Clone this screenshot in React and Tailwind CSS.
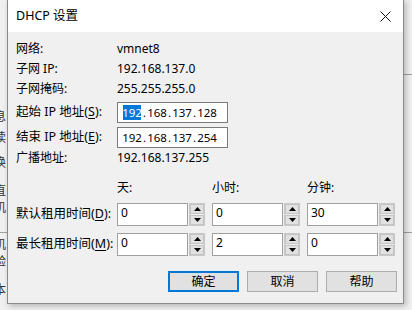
import React from 'react';

const FONT = "font-['Noto_Sans','Noto_Sans_CJK_SC',sans-serif]";

const Mn = ({ text, k }) => (
  <>
    {text}(<span className="underline underline-offset-2">{k}</span>):
  </>
);

const IpField = ({ parts, selectFirst }) => (
  <div className="flex items-center w-[111px] h-[21px] bg-white border border-[#7a7a7a] pl-[5px] text-[11.5px] leading-[15px] text-black">
    {parts.map((p, i) => (
      <React.Fragment key={i}>
        {i > 0 && <span className="w-[7px] h-[15px] flex justify-center">.</span>}
        <span className={`w-[18px] h-[15px] flex justify-center ${i === 0 && selectFirst ? 'bg-[#0078d7] text-white' : ''}`}>{p}</span>
      </React.Fragment>
    ))}
  </div>
);

const Spin = ({ value }) => (
  <div className="flex h-[23px] w-[88px]">
    <div className="flex-1 bg-white border border-[#a0a0a0] pl-[3px] pt-[1px] text-[12px] leading-[16px] text-black">{value}</div>
    <div className="w-[16px] ml-[1px] flex flex-col gap-[1px] border border-[#c8c8c8] bg-[#f0f0f0]">
      <div className="flex-1 bg-[#e1e1e1] border border-[#c4c4c4] flex items-center justify-center">
        <svg width="7" height="4" viewBox="0 0 7 4"><path d="M3.5 0 L7 4 L0 4 Z" fill="#000" /></svg>
      </div>
      <div className="flex-1 bg-[#e1e1e1] border border-[#c4c4c4] flex items-center justify-center">
        <svg width="7" height="4" viewBox="0 0 7 4"><path d="M0 0 L7 0 L3.5 4 Z" fill="#000" /></svg>
      </div>
    </div>
  </div>
);

const Btn = ({ children, primary }) => (
  <div className={`w-[71px] h-[21px] flex items-center justify-center bg-[#e1e1e1] text-[12px] text-black ${primary ? 'border-2 border-[#0078d7]' : 'border border-[#adadad]'}`}>
    {children}
  </div>
);

export default function App() {
  const bgChars = [
    ['息', 109], ['读', 130], ['换', 155], ['直', 183], ['机', 200], ['机', 237], ['验', 254], ['本', 282],
  ];
  return (
    <div className={`relative w-[412px] h-[310px] overflow-hidden bg-[#f0f0f0] ${FONT}`}>
      {/* background window fragments */}
      {bgChars.map(([c, y]) => (
        <span key={y} className="absolute left-[-6px] text-[12px] leading-[16px] text-[#333]" style={{ top: y }}>{c}</span>
      ))}
      <div className="absolute left-0 top-[232px] w-[10px] h-px bg-[#a0a0a0]" />
      <div className="absolute right-0 top-[74px] w-[10px] h-px bg-[#a0a0a0]" />
      <div className="absolute right-0 top-[232px] w-[10px] h-px bg-[#a0a0a0]" />

      {/* dialog */}
      <div className="absolute left-[7px] top-[-1px] w-[397px] h-[305px] border border-[#8a8a8a] bg-[#f0f0f0] shadow-[2px_2px_6px_rgba(0,0,0,0.25)] flex flex-col">
        <div className="h-[32px] bg-white flex items-center justify-between pl-[8px] pr-[8px] shrink-0">
          <span className="text-[12.5px] text-black">DHCP 设置</span>
          <svg width="11" height="11" viewBox="0 0 11 11" className="mr-[4px]">
            <path d="M0.5 0.5 L10.5 10.5 M10.5 0.5 L0.5 10.5" stroke="#111" strokeWidth="1" />
          </svg>
        </div>

        <div className="pl-[8px] pt-[7px] text-[12px] text-black">
          <div className="grid grid-cols-[101px_1fr] auto-rows-[20px] items-center">
            <span>网络:</span><span>vmnet8</span>
            <span>子网 IP:</span><span>192.168.137.0</span>
            <span>子网掩码:</span><span>255.255.255.0</span>
          </div>
          <div className="grid grid-cols-[101px_1fr] items-center mt-[3px] gap-y-[4px]">
            <span className="text-[12.5px]"><Mn text="起始 IP 地址" k="S" /></span>
            <IpField parts={['192', '168', '137', '128']} selectFirst />
            <span className="text-[12.5px]"><Mn text="结束 IP 地址" k="E" /></span>
            <IpField parts={['192', '168', '137', '254']} />
          </div>
          <div className="grid grid-cols-[101px_1fr] h-[20px] items-center">
            <span>广播地址:</span><span>192.168.137.255</span>
          </div>

          <div className="grid grid-cols-[101px_95px_95px_1fr] items-center mt-[10px]">
            <span />
            <span className="h-[20px] leading-[20px]">天:</span>
            <span className="h-[20px] leading-[20px]">小时:</span>
            <span className="h-[20px] leading-[20px]">分钟:</span>
          </div>
          <div className="grid grid-cols-[101px_95px_95px_1fr] items-center mt-[5px] gap-y-[7px]">
            <span className="text-[12.5px]"><Mn text="默认租用时间" k="D" /></span>
            <Spin value="0" /><Spin value="0" /><Spin value="30" />
            <span className="text-[12.5px]"><Mn text="最长租用时间" k="M" /></span>
            <Spin value="0" /><Spin value="2" /><Spin value="0" />
          </div>

          <div className="flex justify-end gap-[8px] mt-[15px] pr-[6px]">
            <Btn primary>确定</Btn>
            <Btn>取消</Btn>
            <Btn>帮助</Btn>
          </div>
        </div>
      </div>
    </div>
  );
}
